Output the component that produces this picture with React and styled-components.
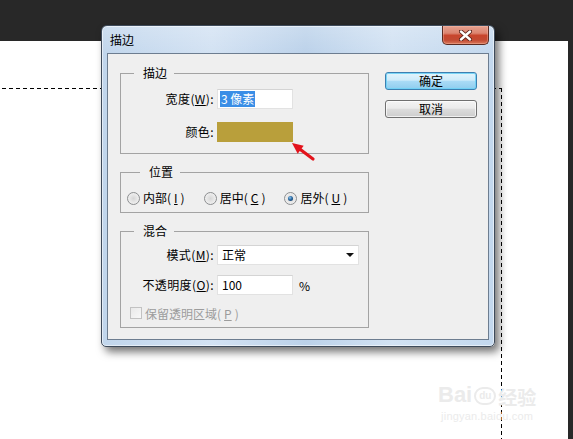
import React from "react";
import styled, { createGlobalStyle } from "styled-components";

const GlobalStyle = createGlobalStyle`
  html, body { margin: 0; padding: 0; background: #282828; }
  body { font-family: "Noto Sans CJK SC", "Noto Sans", sans-serif; font-size: 12px; color: #000; }
  * { box-sizing: border-box; }
`;

const Workspace = styled.div`
  position: relative;
  width: 573px;
  height: 439px;
  overflow: hidden;
  background: #282828;
  padding: 41px 5px 0 0;
  display: flex;
`;

const Canvas = styled.div`
  position: relative;
  flex: 1;
  background: #ffffff;
`;

const Marquee = styled.div`
  position: absolute;
  top: 47px;
  left: -5px;
  width: 507px;
  bottom: -10px;
  background:
    repeating-linear-gradient(90deg, #000 0 4px, transparent 4px 7px) top left / 100% 1px no-repeat,
    repeating-linear-gradient(180deg, #000 0 4px, transparent 4px 7px) top right / 1px 100% no-repeat;
`;

const Watermark = styled.div`
  position: absolute;
  left: 438px;
  top: 343px;
  display: flex;
  flex-direction: column;
  align-items: center;
  color: #ebebeb;
  font-family: "Liberation Sans", Arial, sans-serif;
  line-height: 1;
`;

const WmTop = styled.div`
  display: flex;
  align-items: flex-end;
  gap: 2px;
  font-size: 22px;
  font-weight: bold;
`;

const WmPaw = styled.span`
  display: inline-flex;
  align-items: center;
  justify-content: center;
  width: 22px;
  height: 18px;
  border-radius: 9px;
  border: 2px solid #ebebeb;
  font-size: 10px;
  margin-bottom: 1px;
`;

const WmCjk = styled.span`
  font-family: "Noto Sans CJK SC", sans-serif;
  font-size: 19px;
  font-weight: bold;
`;

const WmSub = styled.div`
  margin-top: 5px;
  font-size: 11px;
  letter-spacing: 0.2px;
`;

const Dialog = styled.div`
  position: absolute;
  left: 101px;
  top: 25px;
  width: 394px;
  height: 322px;
  border: 1px solid #3e4b5b;
  border-radius: 6px 6px 5px 5px;
  background:
    linear-gradient(180deg, rgba(255,255,255,0.2) 0px, rgba(255,255,255,0) 27px),
    linear-gradient(90deg, #c1d6ec 0%, #d3e2f3 28%, #bcd2ea 52%, #d2e2f3 74%, #c3d8ee 100%);
  box-shadow: 4px 5px 9px rgba(0, 0, 0, 0.55), inset 0 0 0 1px rgba(255,255,255,0.55);
  padding: 0 5px 6px 5px;
  display: flex;
  flex-direction: column;
`;

const TitleBar = styled.div`
  height: 27px;
  display: flex;
  justify-content: space-between;
  align-items: flex-start;
`;

const Title = styled.span`
  align-self: center;
  padding-left: 3px;
  line-height: 16px;
  margin-top: 1px;
`;

const CloseButton = styled.div`
  width: 47px;
  height: 19px;
  border: 1px solid #5b2b22;
  border-top: none;
  border-radius: 0 0 5px 5px;
  background: linear-gradient(180deg, #e6a190 0%, #dc8470 40%, #c8452d 52%, #c24a33 78%, #d9785a 100%);
  box-shadow: inset 0 0 0 1px rgba(255, 200, 180, 0.35);
  display: flex;
  align-items: center;
  justify-content: center;
`;

const Client = styled.div`
  flex: 1;
  border: 1px solid #6d7d90;
  background: #efefef;
  padding: 11px 0 0 12px;
  display: flex;
  gap: 16px;
`;

const LeftColumn = styled.div`
  width: 249px;
  display: flex;
  flex-direction: column;
  gap: 10px;
`;

const Group = styled.fieldset`
  margin: 0;
  min-width: 0;
  border: 1px solid #a3a3a3;
  padding: ${(p) => p.$pad};
`;

const Legend = styled.legend`
  margin-left: 13px;
  padding: 0 7px 0 9px;
  line-height: 16px;
  font-size: 12px;
`;

const FormGrid = styled.div`
  display: grid;
  grid-template-columns: 93px auto;
  column-gap: 3px;
  row-gap: ${(p) => p.$rowGap || 13}px;
  align-items: center;
`;

const Label = styled.span`
  text-align: right;
  line-height: 20px;
  white-space: nowrap;
  letter-spacing: 0.4px;
`;

const Key = styled.u`
  text-decoration: underline;
  text-underline-offset: 1px;
`;

const TextBox = styled.div`
  width: ${(p) => p.$w || 76}px;
  height: 20px;
  background: #fff;
  border: 1px solid #e2e2e2;
  border-top-color: #d4d4d4;
  display: flex;
  align-items: center;
  padding-left: ${(p) => p.$pl || 4}px;
  line-height: 16px;
`;

const Selected = styled.span`
  background: #3a8ee6;
  color: #fff;
  padding: 0 1px;
  line-height: 16px;
`;

const Swatch = styled.div`
  width: 76px;
  height: 20px;
  background: #b99f3b;
`;

const FieldRow = styled.div`
  display: flex;
  align-items: center;
  gap: 6px;
`;

const SelectBox = styled(TextBox)`
  justify-content: space-between;
  padding-right: 4px;
`;

const Caret = styled.span`
  width: 0;
  height: 0;
  border-left: 4px solid transparent;
  border-right: 4px solid transparent;
  border-top: 4px solid #111;
`;

const RadioRow = styled.div`
  display: flex;
  align-items: center;
  gap: 19px;
  height: 16px;
`;

const RadioItem = styled.label`
  display: flex;
  align-items: center;
  gap: 3px;
  line-height: 16px;
`;

const RadioDot = styled.span`
  position: relative;
  width: 13px;
  height: 13px;
  border-radius: 50%;
  border: 1px solid #8c8e90;
  background: radial-gradient(circle at 50% 50%, #d6d6d6 0%, #e8e8e8 50%, #f7f7f7 100%);
  &::after {
    content: "";
    display: ${(p) => (p.$checked ? "block" : "none")};
    position: absolute;
    left: 3px;
    top: 3px;
    width: 5px;
    height: 5px;
    border-radius: 50%;
    background: radial-gradient(circle at 40% 35%, #8cc4ee 0%, #2b6aa3 45%, #0e2d4d 100%);
  }
`;

const CheckRow = styled.div`
  grid-column: 1 / -1;
  display: flex;
  align-items: center;
  gap: 3px;
  padding-left: 9px;
  height: 16px;
  color: #9c9c9c;
`;

const CheckBox = styled.span`
  width: 12px;
  height: 12px;
  border: 1px solid #c2c2c2;
  background: linear-gradient(135deg, #e9e9e9, #f8f8f8);
`;

const RightColumn = styled.div`
  padding-top: 7px;
  display: flex;
  flex-direction: column;
  gap: 10px;
`;

const Button = styled.div`
  width: 92px;
  height: 18px;
  border-radius: 3px;
  display: flex;
  align-items: center;
  justify-content: center;
  line-height: 16px;
  border: 1px solid ${(p) => (p.$primary ? "#3c7fb1" : "#707070")};
  background: ${(p) =>
    p.$primary
      ? "linear-gradient(180deg, #e3f4fc 0%, #cdebfa 45%, #a9dbf6 52%, #8fcdee 100%)"
      : "linear-gradient(180deg, #f4f4f4 0%, #ebebeb 45%, #dcdcdc 52%, #cdcdcd 100%)"};
  box-shadow: inset 0 0 0 1px ${(p) => (p.$primary ? "rgba(110,210,245,0.9)" : "rgba(255,255,255,0.7)")};
`;

const ArrowMark = styled.svg`
  position: absolute;
  left: 288px;
  top: 138px;
  overflow: visible;
`;

export default function App() {
  return (
    <>
      <GlobalStyle />
      <Workspace>
        <Canvas>
          <Marquee />
          <Watermark>
            <WmTop>
              <span>Bai</span>
              <WmPaw>du</WmPaw>
              <WmCjk>经验</WmCjk>
            </WmTop>
            <WmSub>jingyan.baidu.com</WmSub>
          </Watermark>
        </Canvas>

        <Dialog>
          <TitleBar>
            <Title>描边</Title>
            <CloseButton>
              <svg width="13" height="11" viewBox="0 0 13 11">
                <path d="M2 1.5 L11 9.5 M11 1.5 L2 9.5" stroke="#5a2018" strokeWidth="4.2" strokeLinecap="round" />
                <path d="M2 1.5 L11 9.5 M11 1.5 L2 9.5" stroke="#ffffff" strokeWidth="2.4" strokeLinecap="round" />
              </svg>
            </CloseButton>
          </TitleBar>

          <Client>
            <LeftColumn>
              <Group $pad="8px 0 11px 0">
                <Legend>描边</Legend>
                <FormGrid>
                  <Label>
                    宽度(<Key>W</Key>):
                  </Label>
                  <TextBox $pl={2}>
                    <Selected>3 像素</Selected>
                  </TextBox>
                  <Label>颜色:</Label>
                  <Swatch />
                </FormGrid>
              </Group>

              <Group $pad="10px 0 6px 6px">
                <Legend>位置</Legend>
                <RadioRow>
                  <RadioItem>
                    <RadioDot />
                    内部(<Key>I</Key>)
                  </RadioItem>
                  <RadioItem>
                    <RadioDot />
                    居中(<Key>C</Key>)
                  </RadioItem>
                  <RadioItem>
                    <RadioDot $checked />
                    居外(<Key>U</Key>)
                  </RadioItem>
                </RadioRow>
              </Group>

              <Group $pad="6px 0 6px 0">
                <Legend>混合</Legend>
                <FormGrid $rowGap={10}>
                  <Label>
                    模式(<Key>M</Key>):
                  </Label>
                  <SelectBox $w={142}>
                    <span>正常</span>
                    <Caret />
                  </SelectBox>
                  <Label>
                    不透明度(<Key>O</Key>):
                  </Label>
                  <FieldRow>
                    <TextBox>100</TextBox>
                    <span>%</span>
                  </FieldRow>
                  <CheckRow>
                    <CheckBox />
                    保留透明区域(<Key>P</Key>)
                  </CheckRow>
                </FormGrid>
              </Group>
            </LeftColumn>

            <RightColumn>
              <Button $primary>确定</Button>
              <Button>取消</Button>
            </RightColumn>
          </Client>
        </Dialog>

        <ArrowMark width="28" height="26" viewBox="0 0 28 26">
          <line x1="25" y1="21" x2="11" y2="10.5" stroke="#e3141c" strokeWidth="3.2" strokeLinecap="round" />
          <polygon points="4,5 15.7,7.7 9.7,15.7" fill="#e3141c" />
        </ArrowMark>
      </Workspace>
    </>
  );
}
